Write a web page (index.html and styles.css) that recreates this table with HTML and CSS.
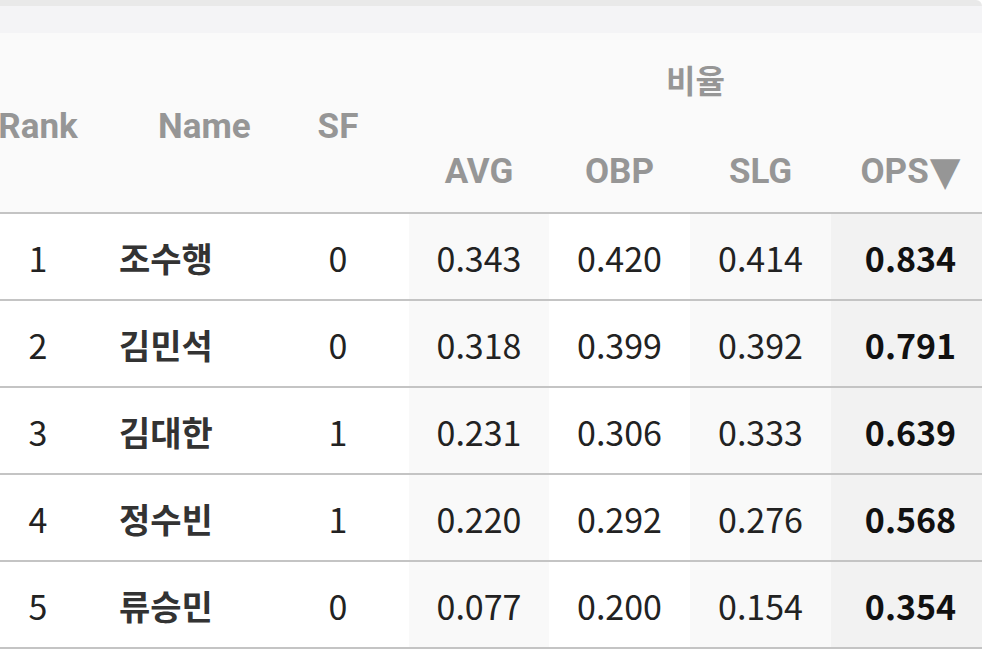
FILE: index.html
```html
<!DOCTYPE html>
<html lang="ko">
<head>
<meta charset="utf-8">
<title>기록</title>
<link rel="stylesheet" href="styles.css">
</head>
<body>
<div class="topbar"></div>
<div class="band"></div>
<div class="table">
  <div class="thead">
    <div class="th th-rank">Rank</div>
    <div class="th th-name">Name</div>
    <div class="th th-sf">SF</div>
    <div class="th th-group">비율</div>
    <div class="th th-sub">AVG</div>
    <div class="th th-sub">OBP</div>
    <div class="th th-sub">SLG</div>
    <div class="th th-sub">OPS<span class="sort">▼</span></div>
  </div>
  <div class="row">
    <div class="td rank">1</div><div class="td name">조수행</div><div class="td sf">0</div>
    <div class="td avg">0.343</div><div class="td obp">0.420</div><div class="td slg">0.414</div><div class="td ops">0.834</div>
  </div>
  <div class="row">
    <div class="td rank">2</div><div class="td name">김민석</div><div class="td sf">0</div>
    <div class="td avg">0.318</div><div class="td obp">0.399</div><div class="td slg">0.392</div><div class="td ops">0.791</div>
  </div>
  <div class="row">
    <div class="td rank">3</div><div class="td name">김대한</div><div class="td sf">1</div>
    <div class="td avg">0.231</div><div class="td obp">0.306</div><div class="td slg">0.333</div><div class="td ops">0.639</div>
  </div>
  <div class="row">
    <div class="td rank">4</div><div class="td name">정수빈</div><div class="td sf">1</div>
    <div class="td avg">0.220</div><div class="td obp">0.292</div><div class="td slg">0.276</div><div class="td ops">0.568</div>
  </div>
  <div class="row">
    <div class="td rank">5</div><div class="td name">류승민</div><div class="td sf">0</div>
    <div class="td avg">0.077</div><div class="td obp">0.200</div><div class="td slg">0.154</div><div class="td ops">0.354</div>
  </div>
</div>
</body>
</html>
```

FILE: styles.css
```css
html, body {
  margin: 0;
  padding: 0;
  background: #ffffff;
  overflow: hidden;
}
body {
  width: 982px;
  height: 655px;
  font-family: "Noto Sans CJK KR", "Noto Sans", sans-serif;
}
.topbar {
  height: 6px;
  background: #e9e9e9;
  border-top-right-radius: 6px;
}
.band {
  height: 27px;
  background: #f4f4f6;
}
.table {
  width: 990px;
}
.thead,
.row {
  display: grid;
  grid-template-columns: 76px 191px 142px 140px 141px 141px 159px;
}
.thead {
  grid-template-rows: 95px 84px;
  background: #fafafa;
  border-bottom: 2px solid #c4c4c4;
}
.th {
  display: flex;
  align-items: center;
  justify-content: center;
  font-family: Roboto, "Noto Sans CJK KR", sans-serif;
  font-weight: 700;
  font-size: 35px;
  line-height: 1;
  color: #969696;
  white-space: nowrap;
}
.th-rank, .th-name, .th-sf {
  grid-row: 1 / span 2;
  padding-top: 7px;
}
.th-name {
  justify-content: flex-start;
  padding-left: 82px;
}
.th-group {
  grid-column: 4 / span 4;
  font-family: "Noto Sans CJK KR", sans-serif;
  font-size: 32px;
  padding-right: 8px;
  padding-bottom: 4px;
}
.th-sub {
  padding-top: 2px;
}
.sort {
  font-family: "DejaVu Sans", sans-serif;
  font-size: 40px;
  line-height: 1;
  margin-left: 1px;
}
.row {
  height: 85px;
  border-bottom: 2px solid #c4c4c4;
}
.td {
  display: flex;
  align-items: center;
  justify-content: center;
  padding-top: 3px;
  font-size: 34px;
  line-height: 1;
  color: #222222;
  white-space: nowrap;
}
.name {
  justify-content: flex-start;
  padding-left: 43px;
  font-weight: 700;
  color: #333333;
}
.avg, .slg {
  background: #f9f9f9;
}
.ops {
  background: #f2f2f2;
  font-weight: 700;
  color: #111111;
}
```
